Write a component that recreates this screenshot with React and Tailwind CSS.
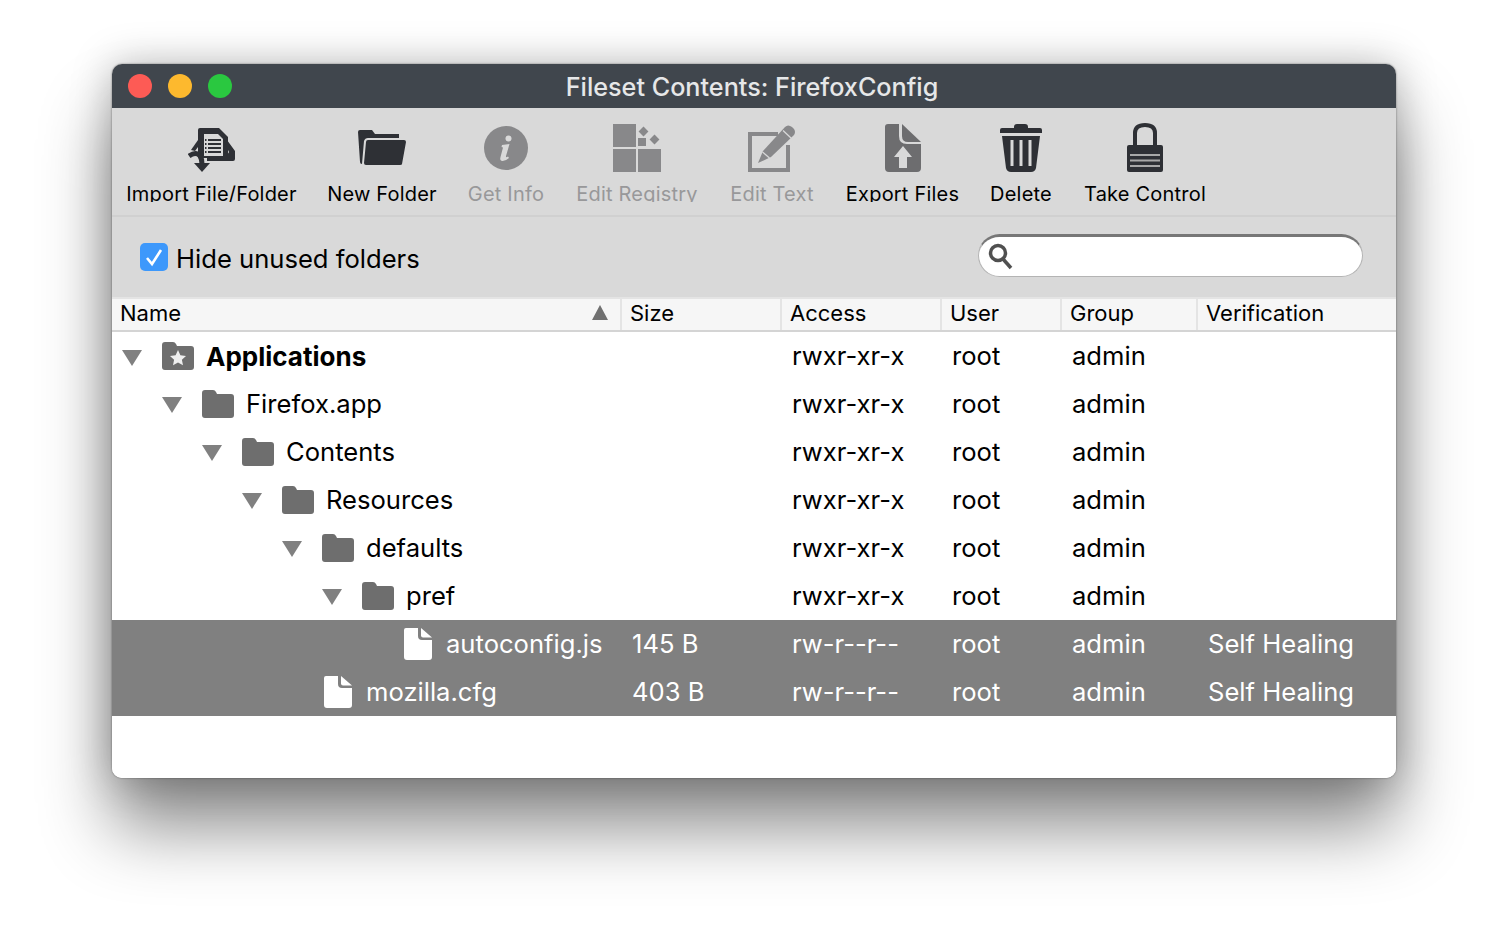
const font = "font-['Inter','Liberation_Sans',sans-serif]"

function ImportIcon() {
    return (
        <svg width="47" height="44" viewBox="0 0 47 44" className="mt-1">
            {/* paper */}
            <path d="M10 2 Q10 0 12 0 L31 0 L40 9 L40 30 L10 30 Z" fill="#2e3035" />
            <path d="M16 6 L30 6 L35 11 L35 28 L16 28 Z" fill="#d9d9d9" />
            <path d="M20 12 H33 M20 16 H33 M20 20 H33 M20 24 H33 M17 12 H18.5 M17 16 H18.5 M17 20 H18.5 M17 24 H18.5" stroke="#2e3035" strokeWidth="1.8" />
            {/* tray */}
            <path d="M39 12 L47 23 L47 31 Q47 33 45 33 L19 33 L19 29 L38 29 L41 24 L37 16 Z" fill="#2e3035" />
            <path d="M10 12 L3 22 L7 23 L10 19 Z" fill="#2e3035" />
            {/* round arrow */}
            <path d="M1 28 Q8 23 12 28 Q14 31 14 36" fill="none" stroke="#2e3035" strokeWidth="5" />
            <path d="M6 35 H22 L14 44 Z" fill="#2e3035" />
        </svg>
    )
}

function OpenFolderIcon() {
    return (
        <svg width="50" height="38" viewBox="0 0 50 38">
            <path d="M1 3 Q1 1 3 1 L15 1 L18 5 L42 5 L42 9 L11 9 Q8 9 7 12 L5 35 Q3 35 3 33 Z" fill="#2e3035" />
            <path d="M11 11 L47 11 Q49 11 49 13 L45 35 Q45 36 43 36 L9 36 Q7 36 7 34 L9 13 Q9 11 11 11 Z" fill="#2e3035" />
        </svg>
    )
}

function InfoIcon() {
    return (
        <svg width="44" height="44" viewBox="0 0 44 44">
            <circle cx="22" cy="22" r="22" fill="#88888a" />
            <circle cx="24.5" cy="12.5" r="3" fill="#d9d9d9" />
            <path d="M18 19 L25.5 18 L22 30 Q21.5 32 24 30.5 L25 32 Q21 35.5 18 35 Q15.5 34.5 16.5 31 L19 21.5 L17.5 21 Z" fill="#d9d9d9" />
        </svg>
    )
}

function RegistryIcon() {
    return (
        <svg width="50" height="48" viewBox="0 0 50 48" fill="#88888a">
            <rect x="1" y="0" width="23" height="23" />
            <rect x="1" y="25" width="23" height="23" />
            <rect x="26" y="25" width="23" height="23" />
            <rect x="26" y="14" width="8" height="8" />
            <rect x="28" y="4" width="7" height="7" transform="rotate(45 31.5 7.5)" />
            <rect x="39" y="12" width="7" height="7" transform="rotate(45 42.5 15.5)" />
        </svg>
    )
}

function EditTextIcon() {
    return (
        <svg width="50" height="48" viewBox="0 0 50 48">
            <path d="M3 10 H31 M3 8 V46 H41 V21" fill="none" stroke="#88888a" strokeWidth="4" />
            <path d="M11 39 L16 27 L38 3 Q41 0 45 3 L47 5 Q49 8 47 11 L24 33 Z" fill="#88888a" />
            <path d="M36 6.5 L44.5 14.5" stroke="#d9d9d9" strokeWidth="1.2" />
            <path d="M15.5 28 L22.5 34" stroke="#d9d9d9" strokeWidth="1.2" />
        </svg>
    )
}

function ExportIcon() {
    return (
        <svg width="38" height="50" viewBox="0 0 38 50">
            <path d="M4 1 L15 1 L15 13 Q15 21 23 21 L37 21 L37 45 Q37 49 33 49 L5 49 Q1 49 1 45 L1 4 Q1 1 4 1 Z" fill="#6d6d6f" />
            <path d="M18 1 L37 19 L24 19 Q18 19 18 13 Z" fill="#6d6d6f" />
            <path d="M19 23 L28 34 L23 34 L23 45 L15 45 L15 34 L10 34 Z" fill="#d9d9d9" />
        </svg>
    )
}

function TrashIcon() {
    return (
        <svg width="44" height="50" viewBox="0 0 44 50">
            <path d="M15 4 Q15 1 18 1 L26 1 Q29 1 29 4 L29 5 L41 5 Q43 5 43 7 L43 10 L1 10 L1 7 Q1 5 3 5 L15 5 Z" fill="#2e3035" />
            <path d="M3 13 L41 13 L37 45 Q36 49 32 49 L12 49 Q8 49 7 45 Z" fill="#2e3035" />
            <path d="M13 17 V43 M22 17 V43 M31 17 V43" stroke="#d9d9d9" strokeWidth="3" />
        </svg>
    )
}

function LockIcon() {
    return (
        <svg width="38" height="50" viewBox="0 0 38 50">
            <path d="M9 23 V10 Q9 2 19 2 Q29 2 29 10 V23" fill="none" stroke="#2e3035" strokeWidth="4" />
            <path d="M3 22 L35 22 Q37 22 37 24 L37 47 Q37 49 35 49 L3 49 Q1 49 1 47 L1 24 Q1 22 3 22 Z" fill="#2e3035" />
            <path d="M4 32 H34 M4 37.5 H34 M4 43 H34" stroke="#a8a8a8" strokeWidth="2.2" />
        </svg>
    )
}

function FolderIcon({ star }) {
    return (
        <svg width="32" height="28" viewBox="0 0 32 28">
            <path d="M0 3 Q0 0 3 0 L11 0 Q13 0 14 2 L15 4 L29 4 Q32 4 32 7 L32 25 Q32 28 29 28 L3 28 Q0 28 0 25 Z" fill="#6e6e6e" />
            {star && <path d="M16 8 L18.4 13.2 L24 13.9 L19.9 17.7 L21 23.3 L16 20.5 L11 23.3 L12.1 17.7 L8 13.9 L13.6 13.2 Z" fill="#efefef" />}
        </svg>
    )
}

function FileIcon() {
    return (
        <svg width="28" height="32" viewBox="0 0 28 32">
            <path d="M2 0 L14 0 L14 8 Q14 12 18 12 L28 12 L28 29 Q28 32 25 32 L3 32 Q0 32 0 29 L0 2 Q0 0 2 0 Z" fill="#fff" />
            <path d="M17 0 L28 9.5 L19 9.5 Q17 9.5 17 7.5 Z" fill="#fff" />
        </svg>
    )
}

const tools = [
    { label: 'Import File/Folder', icon: <ImportIcon />, width: 'w-[171px]' },
    { label: 'New Folder', icon: <OpenFolderIcon />, width: 'w-[108px]' },
    { label: 'Get Info', icon: <InfoIcon />, width: 'w-[78px]', off: true },
    { label: 'Edit Registry', icon: <RegistryIcon />, width: 'w-[122px]', off: true },
    { label: 'Edit Text', icon: <EditTextIcon />, width: 'w-[86px]', off: true },
    { label: 'Export Files', icon: <ExportIcon />, width: 'w-[113px]' },
    { label: 'Delete', icon: <TrashIcon />, width: 'w-[62px]' },
    { label: 'Take Control', icon: <LockIcon />, width: 'w-[124px]' },
]

const rows = [
    { name: 'Applications', depth: 0, star: true, access: 'rwxr-xr-x' },
    { name: 'Firefox.app', depth: 1, access: 'rwxr-xr-x' },
    { name: 'Contents', depth: 2, access: 'rwxr-xr-x' },
    { name: 'Resources', depth: 3, access: 'rwxr-xr-x' },
    { name: 'defaults', depth: 4, access: 'rwxr-xr-x' },
    { name: 'pref', depth: 5, access: 'rwxr-xr-x' },
    { name: 'autoconfig.js', depth: 6, file: true, size: '145 B', access: 'rw-r--r--', verification: 'Self Healing' },
    { name: 'mozilla.cfg', depth: 4, file: true, size: '403 B', access: 'rw-r--r--', verification: 'Self Healing' },
]

const cols = 'grid grid-cols-[509px_160px_160px_120px_136px_199px]'
const headCols = 'grid grid-cols-[510px_160px_160px_120px_136px_198px]'

function Row({ row }) {
    const selected = row.file
    return (
        <div className={`${cols} h-12 items-center text-[25.6px] ${selected ? 'bg-[#808080] text-white' : 'text-black'}`}>
            <div className="flex items-center" style={{ paddingLeft: 10 + row.depth * 40 }}>
                {row.file ? (
                    <div className="ml-[42px] mr-[14px]"><FileIcon /></div>
                ) : (
                    <>
                        <svg width="20" height="16" viewBox="0 0 20 16" className="mt-[3px]"><path d="M0 0 H20 L10 16 Z" fill="#808080" /></svg>
                        <div className="ml-5 mr-[12px]"><FolderIcon star={row.star} /></div>
                    </>
                )}
                <span className={row.star ? 'font-bold text-[26px]' : ''}>{row.name}</span>
            </div>
            <div className="pl-[11px]">{row.size}</div>
            <div className="pl-[11px]">{row.access}</div>
            <div className="pl-[11px]">root</div>
            <div className="pl-[11px]">admin</div>
            <div className="pl-[11px]">{row.verification}</div>
        </div>
    )
}

export default function App() {
    return (
        <div className={`${font} min-h-[938px] bg-white pt-[64px] pl-[112px] overflow-hidden`}>
            <div className="w-[1284px] h-[714px] rounded-[10px] overflow-hidden bg-white shadow-[0_50px_70px_rgba(0,0,0,0.45),0_0_40px_rgba(0,0,0,0.25),0_0_2px_rgba(0,0,0,0.5)] flex flex-col">
                {/* title bar */}
                <div className="h-11 shrink-0 bg-[#40464d] flex items-center relative">
                    <div className="flex gap-[16px] pl-4">
                        <div className="w-6 h-6 rounded-full bg-[#fd5b55]" />
                        <div className="w-6 h-6 rounded-full bg-[#fdb92e]" />
                        <div className="w-6 h-6 rounded-full bg-[#2ac840]" />
                    </div>
                    <div className="absolute inset-0 flex items-center justify-center pt-1 pr-1 text-[25.2px] font-medium text-[#e6e7e8]">Fileset Contents: FirefoxConfig</div>
                </div>

                {/* toolbar */}
                <div className="h-[109px] shrink-0 bg-[#d9d9d9] border-b-2 border-[#d0d0d0] flex gap-[31px] pl-[14px] pt-[15px]">
                    {tools.map((tool) => (
                        <div key={tool.label} className={`${tool.width} shrink-0 flex flex-col items-center`}>
                            <div className="h-[50px] flex items-center justify-center">{tool.icon}</div>
                            {/* labels are cut at the bottom in the original window too */}
                            <div className={`mt-[6px] h-[23px] overflow-hidden whitespace-nowrap text-[20px] tracking-[0.2px] leading-[31px] ${tool.off ? 'text-[#98989a]' : 'text-black'}`}>{tool.label}</div>
                        </div>
                    ))}
                </div>

                {/* filter row */}
                <div className="h-[80px] shrink-0 bg-[#d9d9d9] flex items-center justify-between pl-7 pr-[33px]">
                    <label className="flex items-center gap-2 text-[25.6px] text-black">
                        <span className="w-7 h-7 rounded-[5px] bg-[#3d98fb] flex items-center justify-center">
                            <svg width="20" height="20" viewBox="0 0 20 20"><path d="M3 11 L8 17 L17 3" fill="none" stroke="#fff" strokeWidth="2.6" /></svg>
                        </span>
                        <span className="pt-1">Hide unused folders</span>
                    </label>
                    <div className="w-[385px] h-[43px] -mt-1 rounded-full bg-white border border-[#b4b4b4] border-t-[3px] border-t-[#777777] flex items-center pl-2">
                        <svg width="28" height="30" viewBox="0 0 28 30">
                            <circle cx="11" cy="12" r="7.5" fill="none" stroke="#505050" strokeWidth="3.5" />
                            <path d="M16 18 L24 27" stroke="#505050" strokeWidth="3.5" />
                        </svg>
                    </div>
                </div>

                {/* header */}
                <div className={`${headCols} h-[35px] shrink-0 bg-[#f6f6f6] border-t-2 border-b-2 border-[#e4e4e4] border-b-[#d4d4d4] text-[22px] leading-[26px] text-black`}>
                    <div className="flex items-center justify-between pl-2 pr-3 border-r-2 border-[#e4e4e4]">
                        <span className="pb-[3px]">Name</span>
                        <svg width="16" height="15" viewBox="0 0 16 15" className="mb-1"><path d="M8 0 L16 15 H0 Z" fill="#707070" /></svg>
                    </div>
                    <div className="flex items-center pl-[8px] pb-[3px] border-r-2 border-[#e4e4e4]">Size</div>
                    <div className="flex items-center pl-[8px] pb-[3px] border-r-2 border-[#e4e4e4]">Access</div>
                    <div className="flex items-center pl-[8px] pb-[3px] border-r-2 border-[#e4e4e4]">User</div>
                    <div className="flex items-center pl-[8px] pb-[3px] border-r-2 border-[#e4e4e4]">Group</div>
                    <div className="flex items-center pl-[8px] pb-[3px]">Verification</div>
                </div>

                {/* rows */}
                <div className="flex-1 bg-white">
                    {rows.map((row) => <Row key={row.name} row={row} />)}
                </div>
            </div>
        </div>
    )
}
